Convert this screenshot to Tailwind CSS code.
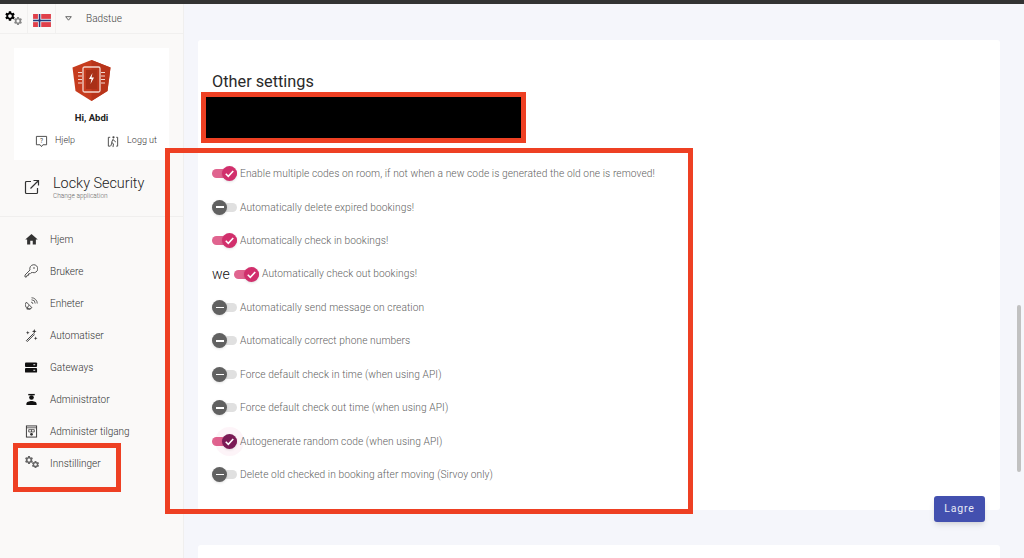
<!DOCTYPE html>
<html>
<head>
    <title>Other settings</title>
    <script src="https://cdn.jsdelivr.net/npm/@tailwindcss/browser@4"></script>
</head>
<body>
    <svg class="hidden">
        <symbol id="gear" viewBox="0 0 24 24"><path d="M19.14 12.94c.04-.3.06-.61.06-.94 0-.32-.02-.64-.07-.94l2.03-1.58a.49.49 0 0 0 .12-.61l-1.92-3.32a.488.488 0 0 0-.59-.22l-2.39.96c-.5-.38-1.03-.7-1.62-.94l-.36-2.54a.484.484 0 0 0-.48-.41h-3.84c-.24 0-.43.17-.47.41l-.36 2.54c-.59.24-1.13.57-1.62.94l-2.39-.96c-.22-.08-.47 0-.59.22L2.74 8.87c-.12.21-.08.47.12.61l2.03 1.58c-.05.3-.09.63-.09.94s.02.64.07.94l-2.03 1.58a.49.49 0 0 0-.12.61l1.92 3.32c.12.22.37.29.59.22l2.39-.96c.5.38 1.03.7 1.62.94l.36 2.54c.05.24.24.41.48.41h3.84c.24 0 .44-.17.47-.41l.36-2.54c.59-.24 1.13-.56 1.62-.94l2.39.96c.22.08.47 0 .59-.22l1.92-3.32c.12-.22.07-.47-.12-.61l-2.01-1.58zM12 15.6c-1.98 0-3.6-1.62-3.6-3.6s1.62-3.6 3.6-3.6 3.6 1.62 3.6 3.6-1.62 3.6-3.6 3.6z"/></symbol>
        <symbol id="check" viewBox="0 0 16 16"><path d="M4 8.3l2.7 2.7L12 5.3" fill="none" stroke="#fff" stroke-width="1.7"/></symbol>
    </svg>

    <div class="relative h-[558px] w-[1024px] overflow-hidden bg-[#f5f6fb] font-['Roboto',sans-serif]">
        <div class="h-1 bg-[#333333]"></div>

        <div class="flex h-[554px]">
            <!-- sidebar -->
            <aside class="w-[184px] shrink-0 border-r border-[#f0efee] bg-[#faf9f8]">
                <div class="flex h-[30px] items-center border-b border-[#f1f0ef]">
                    <div class="relative h-[29px] w-[28px] shrink-0 border-r border-[#f1f0ef]">
                        <svg class="absolute left-[4px] top-[6px] h-[12px] w-[12px] fill-black"><use href="#gear"/></svg>
                        <svg class="absolute left-[13px] top-[12px] h-[10px] w-[10px] fill-[#888888]"><use href="#gear"/></svg>
                    </div>
                    <div class="flex h-[29px] w-[28px] shrink-0 items-center justify-center border-r border-[#f1f0ef]">
                        <svg class="mt-[3px] h-[13px] w-[18px]" viewBox="0 0 22 16"><rect width="22" height="16" fill="#e0404a"/><rect x="6" width="4" height="16" fill="#fff"/><rect y="6" width="22" height="4" fill="#fff"/><rect x="7" width="2" height="16" fill="#223a7a"/><rect y="7" width="22" height="2" fill="#223a7a"/></svg>
                    </div>
                    <svg class="ml-[9px] h-[5px] w-[7px]" viewBox="0 0 7 5"><path d="M.7.7h5.6L3.5 4.2z" fill="none" stroke="#555555" stroke-width=".9"/></svg>
                    <span class="ml-[14px] text-[10px] font-light text-[#444444]">Badstue</span>
                </div>

                <div class="ml-[14px] mt-[14px] flex h-[112px] w-[155px] flex-col items-center bg-white pt-[12px]">
                    <svg class="h-[41px] w-[39px]" viewBox="0 0 39 41">
                        <path d="M19.5 0L38.5 7.5 35.5 31 19.5 41 3.5 31 .5 7.5z" fill="#c63c1e"/>
                        <path d="M19.5 0L38.5 7.5 35.5 31 19.5 41z" fill="#b8341a"/>
                        <rect x="11" y="7" width="17" height="25" rx="1.500" fill="none" stroke="#f3d6cd" stroke-width="1.300"/>
                        <rect x="14" y="10" width="11" height="19" fill="#a93017"/>
                        <path d="M20.500 13l-3.500 6h2.500l-1 5 3.500-6.500h-2.500z" fill="#fff"/>
                        <path d="M6 12.500h4M6 16h4M6 19.500h4M6 23h4M29 12.500h4M29 16h4M29 19.500h4M29 23h4" stroke="#f3d6cd" stroke-width="1.200"/>
                    </svg>
                    <p class="mt-[11px] text-[9.500px] font-bold leading-[12px] text-[#222222]">Hi, Abdi</p>
                    <div class="mt-[11px] flex w-full items-start pl-[21px]">
                        <svg class="h-[13px] w-[13px]" viewBox="0 0 14 14"><path d="M1.500 1.500h11v9H8.500L7 12.500 5.500 10.500H1.500z" fill="none" stroke="#444444"/><text x="7" y="8.500" font-size="7" text-anchor="middle" fill="#444444">?</text></svg>
                        <span class="ml-[7px] text-[9px] font-light leading-[11px] text-[#333333]">Hjelp</span>
                        <svg class="ml-[32px] h-[13px] w-[12px]" viewBox="0 0 12 14"><path d="M1 2.500h2M1 2.500v9.500h2M11 2.500H9.500M11 2.500v9.500H9.500" fill="none" stroke="#444444"/><circle cx="6.500" cy="2.500" r="1.200" fill="#444444"/><path d="M6 4.500L4.500 8 6.500 9.500 6 13M6 5l3 2.500M5 8l-1.500 4" fill="none" stroke="#444444"/></svg>
                        <span class="ml-[8px] text-[9px] font-light leading-[11px] text-[#333333]">Logg ut</span>
                    </div>
                </div>

                <div class="flex h-[57px] items-center border-b border-[#f0efee] pb-[2px] pl-[24px]">
                    <svg class="h-[16px] w-[16px]" viewBox="0 0 16 16"><path d="M7 2.500H2.500a1 1 0 0 0-1 1v10a1 1 0 0 0 1 1h10a1 1 0 0 0 1-1V9M9.500 1.500h5v5M14 2L6.500 9.500" fill="none" stroke="#333333" stroke-width="1.200"/></svg>
                    <div class="ml-[13px]">
                        <p class="text-[14.400px] font-light leading-[17px] text-[#222222]">Locky Security</p>
                        <p class="text-[6.500px] font-light leading-[8px] text-[#666666]">Change application</p>
                    </div>
                </div>

                <nav class="mt-[6px] text-[10px] font-light text-[#333333]">
                    <a class="flex h-[32px] items-center pl-[24px]">
                        <svg class="h-[15px] w-[15px] fill-[#333333]" viewBox="0 0 24 24"><path d="M10 20v-6h4v6h5v-8h3L12 3 2 12h3v8z"/></svg>
                        <span class="ml-[11px]">Hjem</span>
                    </a>
                    <a class="flex h-[32px] items-center pl-[24px]">
                        <svg class="h-[14px] w-[14px]" viewBox="0 0 14 14"><path d="M1 13v-2l5-5a4 4 0 1 1 2.500 2.500L7 8.800 6 9.800H4.500V11.300H3L2.500 13z" fill="none" stroke="#444444" stroke-width=".9"/><circle cx="10" cy="4" r=".8" fill="#444444"/></svg>
                        <span class="ml-[12px]">Brukere</span>
                    </a>
                    <a class="flex h-[32px] items-center pl-[25px]">
                        <svg class="h-[13px] w-[13px]" viewBox="0 0 14 14"><path d="M1.500 5.500l6 6a4 4 0 0 1-6-6zM4 9L2 13h4" fill="none" stroke="#444444"/><path d="M7 3a4 4 0 0 1 4 4M7 .8a6.200 6.200 0 0 1 6.200 6.200M6.500 5.500a2 2 0 0 1 2 2" fill="none" stroke="#444444" stroke-width=".9"/></svg>
                        <span class="ml-[12px]">Enheter</span>
                    </a>
                    <a class="flex h-[32px] items-center pl-[25px]">
                        <svg class="h-[13px] w-[13px]" viewBox="0 0 14 14"><path d="M1.500 12.500l7.500-7.500 1 1-7.500 7.500z" fill="none" stroke="#333333"/><path d="M10 0l.7 1.800L12.500 2.500l-1.800.7L10 5l-.7-1.800L7.500 2.500l1.800-.7zM3 2l.5 1.500L5 4l-1.500.5L3 6l-.5-1.500L1 4l1.500-.5zM11.500 8l.5 1.500 1.500.5-1.500.5-.5 1.500-.5-1.500L9.500 10l1.500-.5z" fill="#333333"/></svg>
                        <span class="ml-[12px]">Automatiser</span>
                    </a>
                    <a class="flex h-[32px] items-center pl-[25px]">
                        <svg class="h-[13px] w-[13px]" viewBox="0 0 14 14"><rect y="1.500" width="13" height="5" rx="1" fill="#111111"/><rect y="7.500" width="13" height="5" rx="1" fill="#111111"/><path d="M9 4h2M9 10h2" stroke="#fff"/></svg>
                        <span class="ml-[12px]">Gateways</span>
                    </a>
                    <a class="flex h-[32px] items-center pl-[25px]">
                        <svg class="h-[13px] w-[13px]" viewBox="0 0 14 14"><path d="M3.500 1h7v1.500h-7z" fill="#111111"/><circle cx="7" cy="4.800" r="2.500" fill="#111111"/><path d="M1.500 13v-1.500C1.500 9.500 4.500 8.500 7 8.500s5.500 1 5.500 3V13z" fill="#111111"/></svg>
                        <span class="ml-[12px]">Administrator</span>
                    </a>
                    <a class="flex h-[32px] items-center pl-[25px]">
                        <svg class="h-[13px] w-[13px]" viewBox="0 0 14 14"><rect x="1.500" y="1" width="11" height="12" fill="none" stroke="#333333"/><path d="M1.500 3h11M4 5h6v2.500H4zM7 5v2.500" fill="none" stroke="#333333" stroke-width=".8"/><circle cx="7" cy="10" r="1.500" fill="#333333"/></svg>
                        <span class="ml-[12px]">Administer tilgang</span>
                    </a>
                    <a class="relative flex h-[32px] items-center pl-[50px]">
                        <svg class="absolute left-[24px] top-[8px] h-[10px] w-[10px] fill-[#666666]"><use href="#gear"/></svg>
                        <svg class="absolute left-[31px] top-[13px] h-[9px] w-[9px] fill-[#666666]"><use href="#gear"/></svg>
                        <span>Innstillinger</span>
                    </a>
                </nav>
            </aside>

            <!-- main -->
            <main class="flex-1 pl-[14px] pr-[24px] pt-[36px]">
                <section class="relative h-[470px] w-[802px] rounded-[3px] bg-white pl-[14px]">
                    <h2 class="pt-[31px] text-[16.300px] leading-[22px] text-[#2a2a2a]">Other settings</h2>
                    <div class="mt-[64px] text-[10.200px] font-light tracking-[0.08px] text-[#5f5f5f]">
                        <div class="flex h-[33.450px] items-center">
                            <span class="relative mr-[3px] h-[9px] w-[25px] rounded-full bg-[#e0648f]"><span class="absolute right-0 top-[-3px] flex h-[15px] w-[15px] rounded-full bg-[#d12f6c] shadow"><svg class="h-[15px] w-[15px]"><use href="#check"/></svg></span></span>
                            <span>Enable multiple codes on room, if not when a new code is generated the old one is removed!</span>
                        </div>
                        <div class="flex h-[33.450px] items-center">
                            <span class="relative mr-[3px] h-[9px] w-[25px] rounded-full bg-[#e0e0e0]"><span class="absolute left-0 top-[-3px] flex h-[15px] w-[15px] items-center justify-center rounded-full bg-[#616161] shadow"><span class="h-[1.500px] w-[8px] bg-white"></span></span></span>
                            <span>Automatically delete expired bookings!</span>
                        </div>
                        <div class="flex h-[33.450px] items-center">
                            <span class="relative mr-[3px] h-[9px] w-[25px] rounded-full bg-[#e0648f]"><span class="absolute right-0 top-[-3px] flex h-[15px] w-[15px] rounded-full bg-[#d12f6c] shadow"><svg class="h-[15px] w-[15px]"><use href="#check"/></svg></span></span>
                            <span>Automatically check in bookings!</span>
                        </div>
                        <div class="flex h-[33.450px] items-center">
                            <span class="mr-[3px] w-[19px] text-[14px] font-light tracking-normal text-[#111111]">we</span>
                            <span class="relative mr-[3px] h-[9px] w-[25px] rounded-full bg-[#e0648f]"><span class="absolute right-0 top-[-3px] flex h-[15px] w-[15px] rounded-full bg-[#d12f6c] shadow"><svg class="h-[15px] w-[15px]"><use href="#check"/></svg></span></span>
                            <span>Automatically check out bookings!</span>
                        </div>
                        <div class="flex h-[33.450px] items-center">
                            <span class="relative mr-[3px] h-[9px] w-[25px] rounded-full bg-[#e0e0e0]"><span class="absolute left-0 top-[-3px] flex h-[15px] w-[15px] items-center justify-center rounded-full bg-[#616161] shadow"><span class="h-[1.500px] w-[8px] bg-white"></span></span></span>
                            <span>Automatically send message on creation</span>
                        </div>
                        <div class="flex h-[33.450px] items-center">
                            <span class="relative mr-[3px] h-[9px] w-[25px] rounded-full bg-[#e0e0e0]"><span class="absolute left-0 top-[-3px] flex h-[15px] w-[15px] items-center justify-center rounded-full bg-[#616161] shadow"><span class="h-[1.500px] w-[8px] bg-white"></span></span></span>
                            <span>Automatically correct phone numbers</span>
                        </div>
                        <div class="flex h-[33.450px] items-center">
                            <span class="relative mr-[3px] h-[9px] w-[25px] rounded-full bg-[#e0e0e0]"><span class="absolute left-0 top-[-3px] flex h-[15px] w-[15px] items-center justify-center rounded-full bg-[#616161] shadow"><span class="h-[1.500px] w-[8px] bg-white"></span></span></span>
                            <span>Force default check in time (when using API)</span>
                        </div>
                        <div class="flex h-[33.450px] items-center">
                            <span class="relative mr-[3px] h-[9px] w-[25px] rounded-full bg-[#e0e0e0]"><span class="absolute left-0 top-[-3px] flex h-[15px] w-[15px] items-center justify-center rounded-full bg-[#616161] shadow"><span class="h-[1.500px] w-[8px] bg-white"></span></span></span>
                            <span>Force default check out time (when using API)</span>
                        </div>
                        <div class="flex h-[33.450px] items-center">
                            <span class="relative mr-[3px] h-[9px] w-[25px] rounded-full bg-[#e0648f]"><span class="absolute right-[-7px] top-[-10px] h-[29px] w-[29px] rounded-full bg-[#d12f6c]/5"></span><span class="absolute right-0 top-[-3px] flex h-[15px] w-[15px] rounded-full bg-[#7a1a55] shadow"><svg class="h-[15px] w-[15px]"><use href="#check"/></svg></span></span>
                            <span class="relative">Autogenerate random code (when using API)</span>
                        </div>
                        <div class="flex h-[33.450px] items-center">
                            <span class="relative mr-[3px] h-[9px] w-[25px] rounded-full bg-[#e0e0e0]"><span class="absolute left-0 top-[-3px] flex h-[15px] w-[15px] items-center justify-center rounded-full bg-[#616161] shadow"><span class="h-[1.500px] w-[8px] bg-white"></span></span></span>
                            <span>Delete old checked in booking after moving (Sirvoy only)</span>
                        </div>
                    </div>
                    <button class="absolute left-[736px] top-[456px] h-[26px] w-[51px] rounded-[3px] bg-[#4350af] text-[10.500px] tracking-[0.8px] text-[#e8eaf6] shadow-md">Lagre</button>
                </section>
                <section class="mt-[35px] h-[40px] w-[802px] rounded-[3px] bg-white"></section>
            </main>
        </div>

        <!-- scrollbar -->
        <div class="absolute left-[1017px] top-[305px] h-[167px] w-[4px] rounded-full bg-[#c1c1c1]"></div>

        <!-- annotation boxes drawn over the screenshot -->
        <div class="absolute left-[201px] top-[92px] h-[51px] w-[325px] border-[5px] border-[#ee4023] bg-black"></div>
        <div class="absolute left-[165px] top-[148px] h-[366px] w-[528px] border-[5px] border-[#ee4023]"></div>
        <div class="absolute left-[13px] top-[443px] h-[49px] w-[108px] border-[5px] border-[#ee4023]"></div>
    </div>
</body>
</html>
